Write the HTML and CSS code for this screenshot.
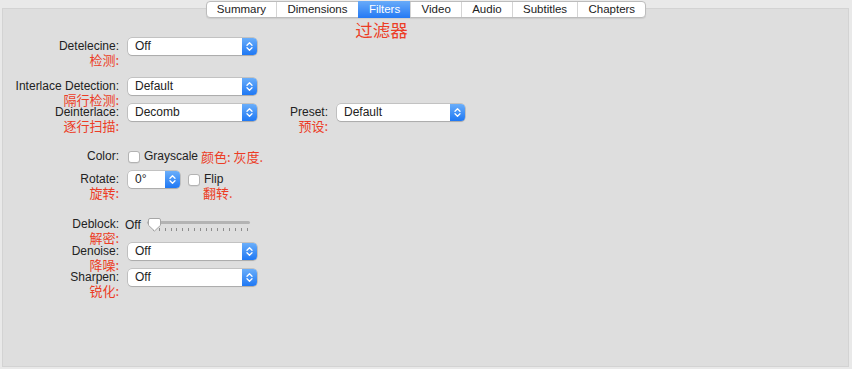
FILE: index.html
```html
<!DOCTYPE html>
<html lang="en">

<head>
    <meta charset="UTF-8">
    <meta name="viewport" content="width=device-width, initial-scale=1.0">
    <title>Filters</title>
    <link rel="stylesheet" href="styles.css">
</head>

<body>
    <nav class="tabs">
        <a class="tab">Summary</a>
        <a class="tab">Dimensions</a>
        <a class="tab active">Filters<span class="zh tab-note">过滤器</span></a>
        <a class="tab">Video</a>
        <a class="tab">Audio</a>
        <a class="tab">Subtitles</a>
        <a class="tab">Chapters</a>
    </nav>

    <main class="panel">
        <div class="row row-detelecine">
            <div class="label">Detelecine:<span class="zh">检测:</span></div>
            <div class="popup">
                <span class="popup-value">Off</span>
                <span class="stepper"><svg width="15" height="17" viewBox="0 0 15 17"><path d="M5 7.2 7.5 4.7 10 7.2M5 9.8 7.5 12.3 10 9.8" fill="none" stroke="#fff" stroke-width="1.3" stroke-linecap="round" stroke-linejoin="round"/></svg></span>
            </div>
        </div>

        <div class="row row-interlace">
            <div class="label">Interlace Detection:<span class="zh">隔行检测:</span></div>
            <div class="popup">
                <span class="popup-value">Default</span>
                <span class="stepper"><svg width="15" height="17" viewBox="0 0 15 17"><path d="M5 7.2 7.5 4.7 10 7.2M5 9.8 7.5 12.3 10 9.8" fill="none" stroke="#fff" stroke-width="1.3" stroke-linecap="round" stroke-linejoin="round"/></svg></span>
            </div>
        </div>

        <div class="row row-deinterlace">
            <div class="label">Deinterlace:<span class="zh">逐行扫描:</span></div>
            <div class="popup">
                <span class="popup-value">Decomb</span>
                <span class="stepper"><svg width="15" height="17" viewBox="0 0 15 17"><path d="M5 7.2 7.5 4.7 10 7.2M5 9.8 7.5 12.3 10 9.8" fill="none" stroke="#fff" stroke-width="1.3" stroke-linecap="round" stroke-linejoin="round"/></svg></span>
            </div>
            <div class="label label-preset">Preset:<span class="zh">预设:</span></div>
            <div class="popup popup-preset">
                <span class="popup-value">Default</span>
                <span class="stepper"><svg width="15" height="17" viewBox="0 0 15 17"><path d="M5 7.2 7.5 4.7 10 7.2M5 9.8 7.5 12.3 10 9.8" fill="none" stroke="#fff" stroke-width="1.3" stroke-linecap="round" stroke-linejoin="round"/></svg></span>
            </div>
        </div>

        <div class="row row-color">
            <div class="label">Color:</div>
            <span class="checkbox"></span>
            <span class="check-text">Grayscale</span>
            <span class="zh inline-note">颜色: 灰度.</span>
        </div>

        <div class="row row-rotate">
            <div class="label">Rotate:<span class="zh">旋转:</span></div>
            <div class="popup popup-small">
                <span class="popup-value">0°</span>
                <span class="stepper"><svg width="15" height="17" viewBox="0 0 15 17"><path d="M5 7.2 7.5 4.7 10 7.2M5 9.8 7.5 12.3 10 9.8" fill="none" stroke="#fff" stroke-width="1.3" stroke-linecap="round" stroke-linejoin="round"/></svg></span>
            </div>
            <span class="checkbox checkbox-flip"></span>
            <span class="check-text">Flip<span class="zh">翻转.</span></span>
        </div>

        <div class="row row-deblock">
            <div class="label label-tight">Deblock:<span class="zh">解密:</span></div>
            <span class="slider-value">Off</span>
            <div class="slider">
                <div class="slider-track"></div>
                <div class="slider-ticks"></div>
                <svg class="slider-knob" width="15" height="14" viewBox="0 0 15 14"><path d="M1.5 2Q1.5 .5 3 .5H12Q13.5 .5 13.5 2V7.3L7.5 13 1.5 7.3Z" fill="#fff" stroke="#a6a6a6"/></svg>
            </div>
        </div>

        <div class="row row-denoise">
            <div class="label">Denoise:<span class="zh">降噪:</span></div>
            <div class="popup">
                <span class="popup-value">Off</span>
                <span class="stepper"><svg width="15" height="17" viewBox="0 0 15 17"><path d="M5 7.2 7.5 4.7 10 7.2M5 9.8 7.5 12.3 10 9.8" fill="none" stroke="#fff" stroke-width="1.3" stroke-linecap="round" stroke-linejoin="round"/></svg></span>
            </div>
        </div>

        <div class="row row-sharpen">
            <div class="label">Sharpen:<span class="zh">锐化:</span></div>
            <div class="popup">
                <span class="popup-value">Off</span>
                <span class="stepper"><svg width="15" height="17" viewBox="0 0 15 17"><path d="M5 7.2 7.5 4.7 10 7.2M5 9.8 7.5 12.3 10 9.8" fill="none" stroke="#fff" stroke-width="1.3" stroke-linecap="round" stroke-linejoin="round"/></svg></span>
            </div>
        </div>
    </main>
</body>

</html>
```

FILE: styles.css
```css
/* Reset */
* {
    margin: 0;
    padding: 0;
    box-sizing: border-box;
}

body {
    font-family: 'Liberation Sans', Arial, sans-serif;
    font-size: 12px;
    color: #222;
    background: #e9e9e9;
    width: 852px;
    height: 369px;
    overflow: hidden;
}

.zh {
    font-family: 'Noto Sans CJK SC', sans-serif;
    color: #ec3c25;
}

/* Tab bar */
.tabs {
    position: relative;
    z-index: 1;
    display: flex;
    width: fit-content;
    height: 17px;
    margin: 1px auto 0;
    background: #fff;
    border: 1px solid #bcbcbc;
    border-radius: 4px;
    box-shadow: 0 1px 1px rgba(0, 0, 0, 0.08);
}

.tab {
    position: relative;
    padding: 0 10.2px;
    font-size: 11.5px;
    line-height: 15px;
    border-left: 1px solid #d4d4d4;
}

.tab:first-child {
    border-left: none;
}

.tab.active {
    margin: -1px 0;
    line-height: 17px;
    color: #fff;
    border-left-color: transparent;
    background: linear-gradient(#68abf9, #2479f4);
}

.tab-note {
    position: absolute;
    top: calc(100% + 2px);
    left: 50%;
    transform: translateX(-50%);
    margin-left: -3px;
    font-size: 17.5px;
    line-height: 20px;
    white-space: nowrap;
}

/* Panel */
.panel {
    height: 359px;
    margin: -10px 3px 0 2px;
    padding-top: 29px;
    background: #dedede;
    border: 1px solid #d3d3d3;
}

.row {
    display: flex;
    align-items: center;
    height: 17px;
}

.row-interlace { margin-top: 23px; }
.row-deinterlace { margin-top: 9px; }
.row-color { margin-top: 27px; }
.row-rotate { margin-top: 6px; }
.row-deblock { margin-top: 28px; }
.row-denoise { margin-top: 10px; }
.row-sharpen { margin-top: 9px; }

.label {
    align-self: flex-start;
    width: 116px;
    margin-right: 9px;
    text-align: right;
    line-height: 17px;
    white-space: nowrap;
}

.label .zh,
.check-text .zh {
    display: block;
    margin-top: -1.5px;
    font-size: 13px;
    line-height: 12px;
}

.label-preset {
    width: 62px;
    margin-left: 9px;
}

.label-tight {
    margin-right: 6px;
}

/* Pop-up buttons */
.popup {
    display: flex;
    width: 129px;
    height: 17px;
    background: #fff;
    border-radius: 4px;
    box-shadow: 0 0 0 0.5px rgba(0, 0, 0, 0.25), 0 1px 1px rgba(0, 0, 0, 0.12);
}

.popup-preset {
    width: 128px;
}

.popup-small {
    width: 52px;
}

.popup-value {
    flex: 1;
    padding-left: 7px;
    line-height: 17px;
}

.stepper {
    display: flex;
    width: 15px;
    border-radius: 0 4px 4px 0;
    background: linear-gradient(#6aaefa, #1f78f4);
}

/* Checkboxes */
.checkbox {
    width: 12px;
    height: 12px;
    background: #fff;
    border: 1px solid #b3b3b3;
    border-radius: 3px;
    box-shadow: 0 0.5px 0.5px rgba(0, 0, 0, 0.1);
}

.checkbox-flip {
    margin-left: 8px;
}

.check-text {
    align-self: flex-start;
    margin-left: 4px;
    line-height: 17px;
}

.check-text .zh {
    margin-left: -1px;
}

.inline-note {
    margin-left: 3px;
    font-size: 13px;
    line-height: 17px;
}

/* Slider */
.slider {
    position: relative;
    width: 103px;
    height: 17px;
    margin-left: 6px;
}

.slider-track {
    height: 3px;
    margin-top: 5px;
    background: #b3b3b3;
    border-radius: 2px;
}

.slider-ticks {
    width: 95px;
    height: 3px;
    margin: 4px 0 0 6px;
    background: repeating-linear-gradient(90deg, #8c8c8c 0 1px, transparent 1px 5.85px);
}

.slider-knob {
    position: absolute;
    top: 2px;
    left: 0;
}
```
